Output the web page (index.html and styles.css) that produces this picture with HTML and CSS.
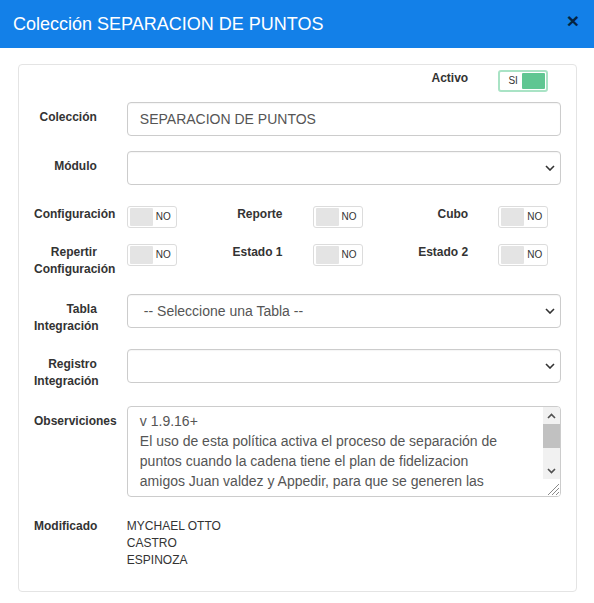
FILE: index.html
```html
<!DOCTYPE html>
<html lang="es">
<head>
<meta charset="utf-8">
<title>Colección SEPARACION DE PUNTOS</title>
<link rel="stylesheet" href="styles.css">
</head>
<body>
<div class="modal">
  <div class="modal-header">
    <h4 class="modal-title">Colección SEPARACION DE PUNTOS</h4>
    <span class="close">×</span>
  </div>
  <div class="modal-body">
    <div class="card">
      <div class="row">
        <div class="cell lbl col5">Activo</div>
        <div class="cell"><div class="sw sw-on"><span class="sw-text">SI</span><span class="knob"></span></div></div>
      </div>

      <div class="row gap-xs">
        <div class="cell lbl pt">Colección</div>
        <div class="cell span5"><div class="input">SEPARACION DE PUNTOS</div></div>
      </div>

      <div class="row gap-md">
        <div class="cell lbl pt">Módulo</div>
        <div class="cell span5"><div class="input select"><span></span><svg class="chev" width="10" height="6" viewBox="0 0 10 6"><path d="M1 1 L5 5 L9 1" /></svg></div></div>
      </div>

      <div class="row gap-lg">
        <div class="cell lbl">Configuración</div>
        <div class="cell"><div class="sw"><span class="knob"></span><span class="sw-text">NO</span></div></div>
        <div class="cell lbl">Reporte</div>
        <div class="cell"><div class="sw"><span class="knob"></span><span class="sw-text">NO</span></div></div>
        <div class="cell lbl">Cubo</div>
        <div class="cell"><div class="sw"><span class="knob"></span><span class="sw-text">NO</span></div></div>
      </div>

      <div class="row gap-md1">
        <div class="cell lbl">Repertir<br>Configuración</div>
        <div class="cell"><div class="sw"><span class="knob"></span><span class="sw-text">NO</span></div></div>
        <div class="cell lbl">Estado 1</div>
        <div class="cell"><div class="sw"><span class="knob"></span><span class="sw-text">NO</span></div></div>
        <div class="cell lbl">Estado 2</div>
        <div class="cell"><div class="sw"><span class="knob"></span><span class="sw-text">NO</span></div></div>
      </div>

      <div class="row gap-md1">
        <div class="cell lbl pt">Tabla<br>Integración</div>
        <div class="cell span5"><div class="input select sel-text"><span>-- Seleccione una Tabla --</span><svg class="chev" width="10" height="6" viewBox="0 0 10 6"><path d="M1 1 L5 5 L9 1" /></svg></div></div>
      </div>

      <div class="row gap-sm">
        <div class="cell lbl pt">Registro<br>Integración</div>
        <div class="cell span5"><div class="input select"><span></span><svg class="chev" width="10" height="6" viewBox="0 0 10 6"><path d="M1 1 L5 5 L9 1" /></svg></div></div>
      </div>

      <div class="row gap-md1">
        <div class="cell lbl pt">Observiciones</div>
        <div class="cell span5">
          <div class="textarea">
            <div class="ta-text">v 1.9.16+<br>El uso de esta política activa el proceso de separación de<br>puntos cuando la cadena tiene el plan de fidelizacion<br>amigos Juan valdez y Appedir, para que se generen las</div>
            <div class="scrollbar">
              <div class="sb-btn"><svg width="9" height="6" viewBox="0 0 9 6"><path d="M1 5 L4.5 1.5 L8 5" /></svg></div>
              <div class="sb-thumb"></div>
              <div class="sb-track"></div>
              <div class="sb-btn"><svg width="9" height="6" viewBox="0 0 9 6"><path d="M1 1 L4.5 4.5 L8 1" /></svg></div>
              <div class="sb-corner"><svg width="17" height="17" viewBox="0 0 17 17"><path d="M16 5 L5 16 M16 9 L9 16 M16 13 L13 16" /></svg></div>
            </div>
          </div>
        </div>
      </div>

      <div class="row gap-xl">
        <div class="cell lbl">Modificado</div>
        <div class="cell span5 value">MYCHAEL OTTO<br>CASTRO<br>ESPINOZA</div>
      </div>
    </div>
  </div>
</div>
</body>
</html>
```
FILE: styles.css
```css
* { box-sizing: border-box; }
body {
  margin: 0;
  background: #fff;
  font-family: "Liberation Sans", Arial, sans-serif;
  color: #333;
}
.modal {
  width: 594px;
  height: 603px;
  background: #fff;
}
.modal-header {
  height: 48px;
  background: #1380e8;
  display: flex;
  align-items: center;
  justify-content: space-between;
  padding: 0 15px 0 13px;
}
.modal-title {
  margin: 0;
  font-size: 18px;
  font-weight: normal;
  line-height: 20px;
  color: #fff;
}
.close {
  font-size: 21px;
  font-weight: bold;
  line-height: 1;
  color: #000;
  opacity: 0.72;
  margin-bottom: 8px;
}
.modal-body {
  padding: 16px 17px 12px 18px;
}
.card {
  height: 528px;
  border: 1px solid #e4e4e4;
  border-radius: 4px;
  padding: 5px 0 0 0;
}
.row {
  display: grid;
  grid-template-columns: repeat(6, minmax(0, 1fr));
  align-items: start;
}
.gap-xs { margin-top: 10px; }
.gap-md { margin-top: 15px; }
.gap-md1 { margin-top: 16px; }
.gap-sm { margin-top: 14px; }
.gap-lg { margin-top: 21px; }
.gap-xl { margin-top: 21px; }
.cell {
  padding: 0 15px;
  min-width: 0;
}
.col5 { grid-column: 5 / span 1; }
.span5 { grid-column: span 5; }
.lbl {
  font-size: 12px;
  font-weight: bold;
  line-height: 17px;
  text-align: right;
  color: #333;
}
.pt { padding-top: 7px; }

/* switches */
.sw {
  width: 50px;
  height: 22px;
  border: 1px solid #dcdcdc;
  border-radius: 3px;
  display: flex;
  align-items: center;
  padding: 2px;
  background: #fff;
}
.sw .knob {
  width: 23px;
  height: 18px;
  background: #e4e4e4;
  border-radius: 1px;
  flex: none;
}
.sw-text {
  flex: 1;
  text-align: center;
  font-size: 10px;
  color: #333;
  line-height: 18px;
}
.sw-on {
  border: 2px solid #a9e3c5;
  padding: 1px;
}
.sw-on .knob {
  background: #5fc692;
  height: 16px;
}
.sw-on .sw-text {
  line-height: 16px;
  padding-left: 3px;
}

/* inputs */
.input {
  height: 34px;
  border: 1px solid #ccc;
  border-radius: 4px;
  padding: 0 12px;
  font-size: 14px;
  color: #555;
  display: flex;
  align-items: center;
  background: #fff;
  box-shadow: inset 0 1px 1px rgba(0, 0, 0, 0.04);
}
.select {
  justify-content: space-between;
  padding-right: 5px;
}
.sel-text { padding-left: 16px; }
.chev path {
  fill: none;
  stroke: #333;
  stroke-width: 1.6;
}

/* textarea */
.textarea {
  height: 91px;
  border: 1px solid #ccc;
  border-radius: 4px;
  display: flex;
  overflow: hidden;
  background: #fff;
}
.ta-text {
  flex: 1;
  padding: 4px 0 0 12px;
  font-size: 14px;
  line-height: 20px;
  color: #555;
  white-space: nowrap;
  overflow: hidden;
}
.scrollbar {
  width: 17px;
  flex: none;
  display: flex;
  flex-direction: column;
  background: #f1f1f1;
}
.sb-btn {
  height: 17px;
  display: flex;
  align-items: center;
  justify-content: center;
}
.sb-btn path {
  fill: none;
  stroke: #505050;
  stroke-width: 1.6;
}
.sb-thumb {
  height: 24px;
  background: #c1c1c1;
}
.sb-track { height: 14px; }
.sb-corner {
  height: 17px;
  background: #fff;
  display: flex;
}
.sb-corner path {
  fill: none;
  stroke: #8a8a8a;
  stroke-width: 1;
}

.value {
  font-size: 12px;
  line-height: 17px;
  color: #333;
}
```
